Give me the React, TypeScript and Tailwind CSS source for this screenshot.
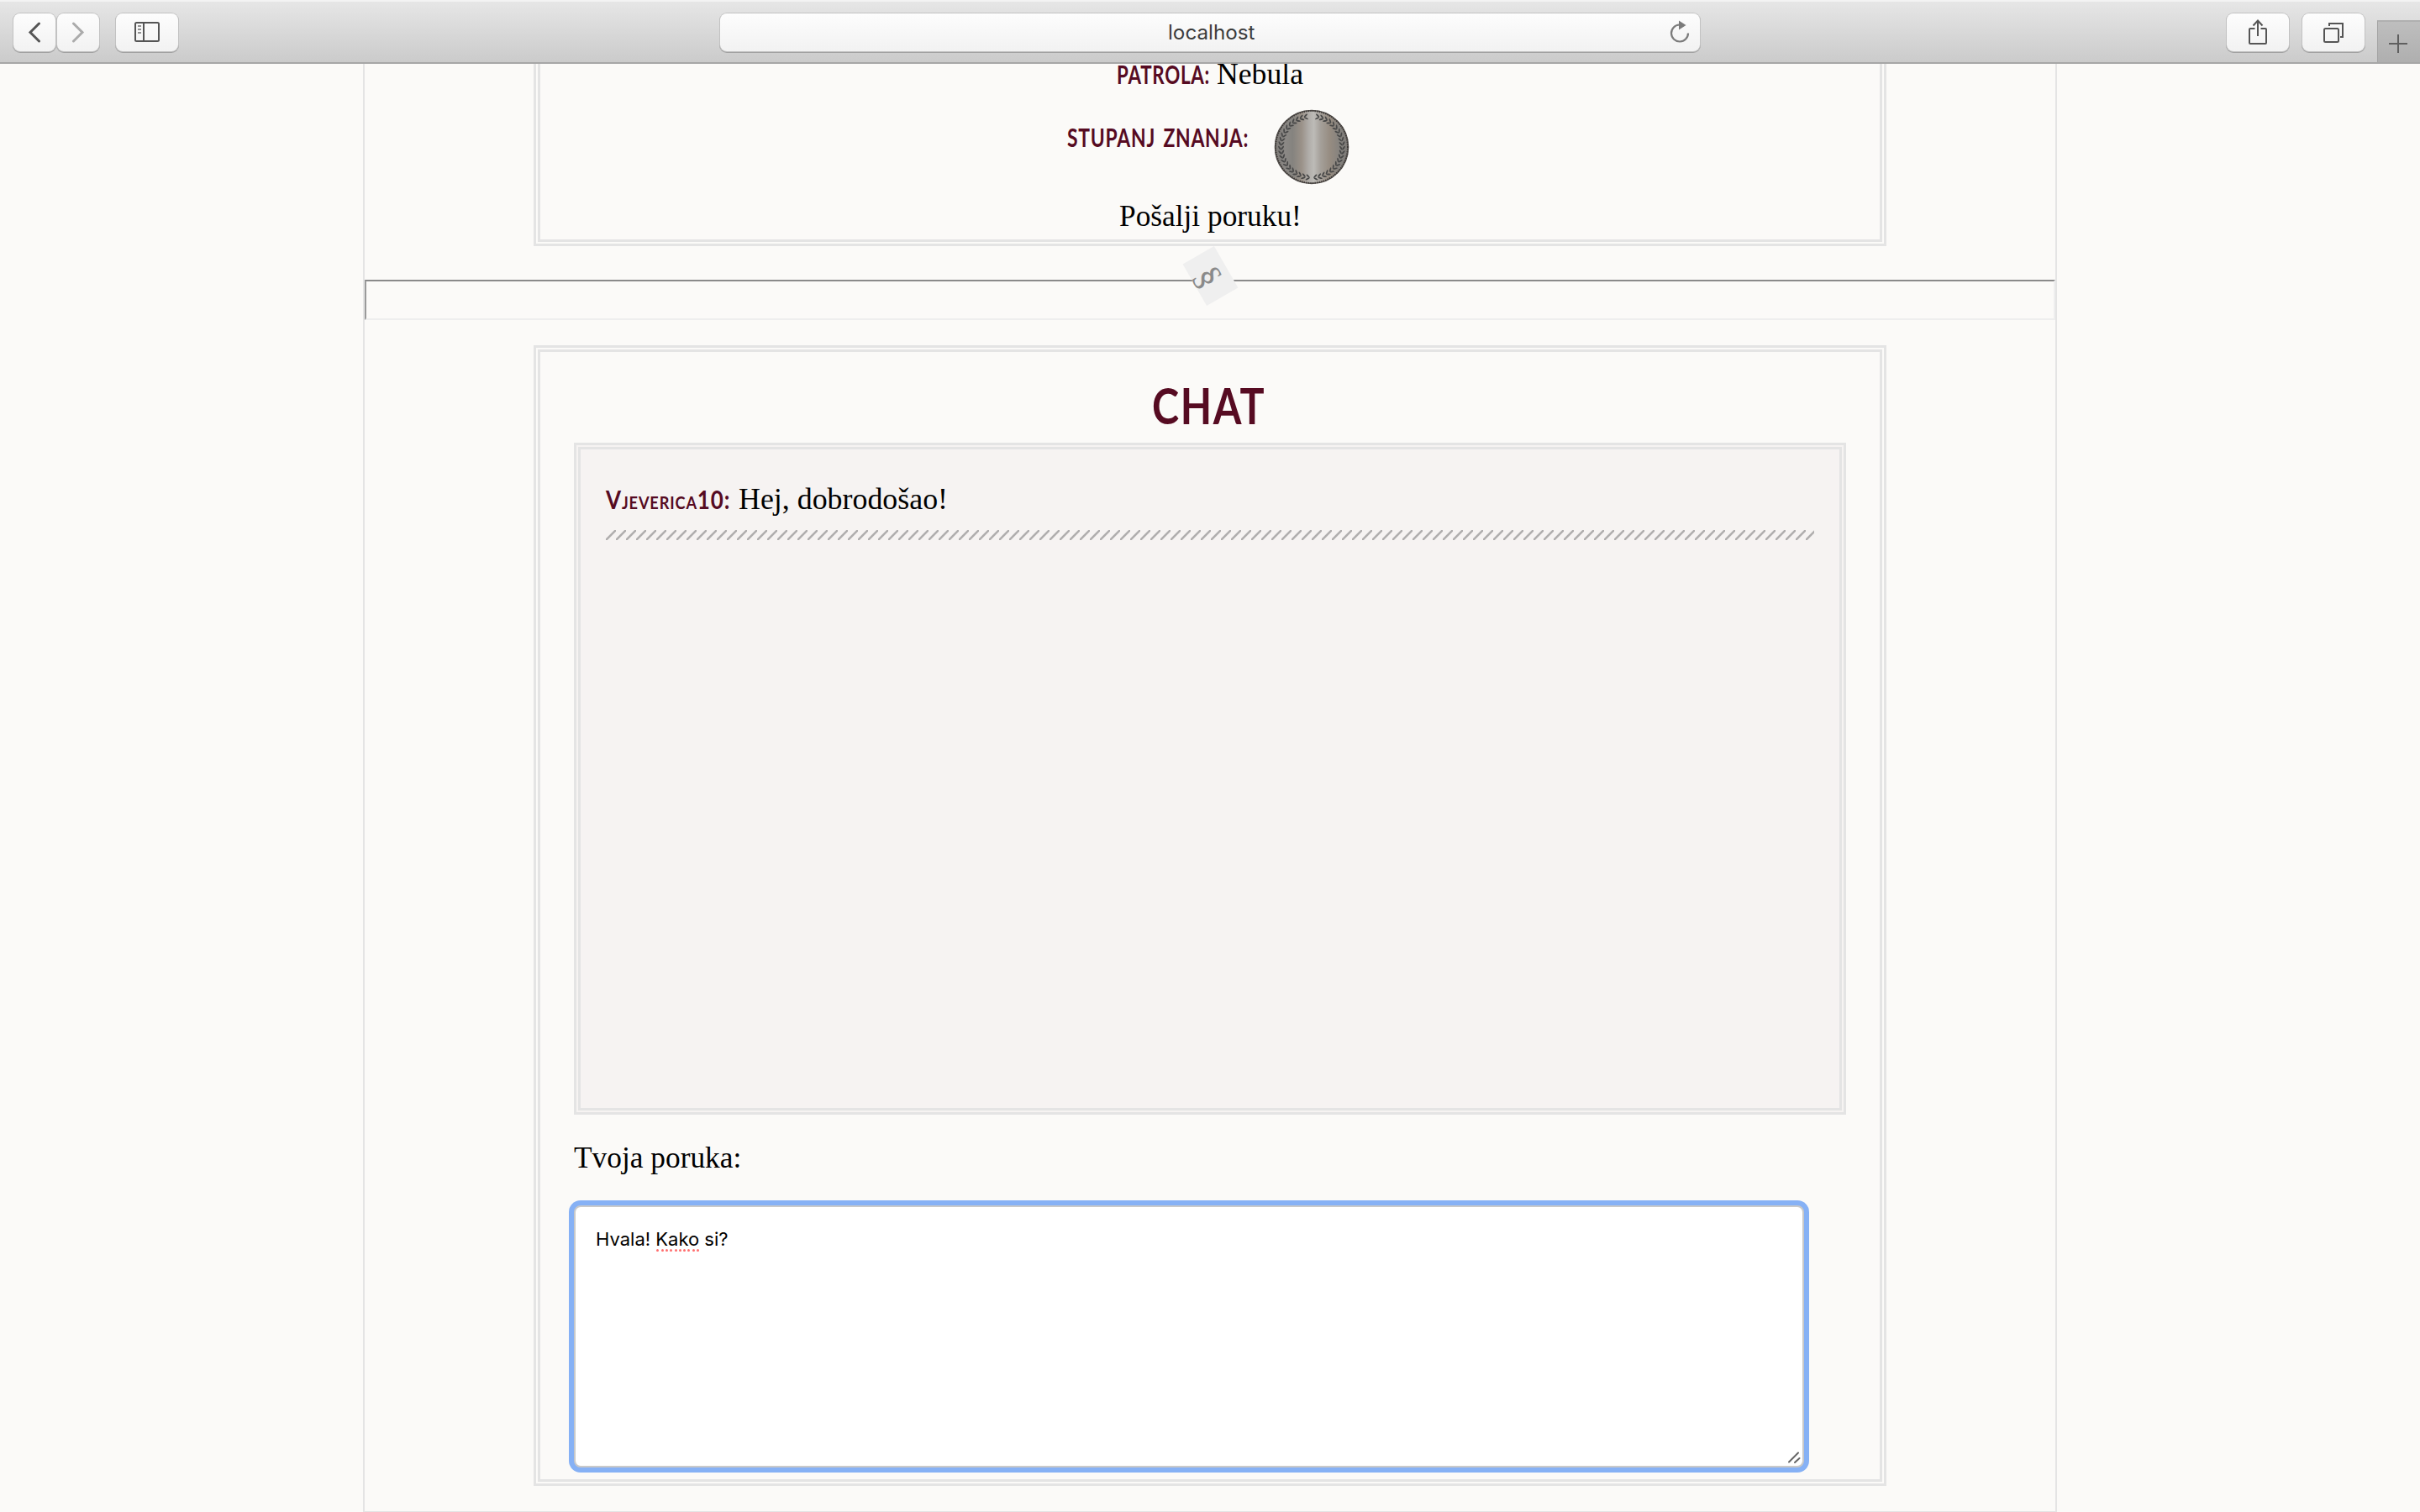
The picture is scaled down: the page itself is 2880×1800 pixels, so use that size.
import { useLayoutEffect, useRef, useState, type ReactNode } from "react";

type FitProps = { width: number; className?: string; children: ReactNode };

/** Keeps a run of text at a fixed width by condensing its letters. */
function Fit({ width, className = "", children }: FitProps) {
  const ref = useRef<HTMLSpanElement>(null);
  const [scale, setScale] = useState(1);
  useLayoutEffect(() => {
    if (ref.current) setScale(width / ref.current.offsetWidth);
  }, [width]);
  return (
    <span className={`inline-block whitespace-nowrap ${className}`} style={{ width }}>
      <span ref={ref} className="inline-block origin-left" style={{ transform: `scaleX(${scale})` }}>
        {children}
      </span>
    </span>
  );
}

const serif = "font-['Liberation_Serif',serif] text-[35px] leading-[40px] text-black";
const label = "font-[Lato,sans-serif] text-[30px] leading-[40px] font-bold tracking-[1px] text-[#560b22]";
const button =
  "flex h-[45px] items-center justify-center rounded-[8px] bg-linear-to-b from-[#fdfdfd] to-[#f2f2f2] shadow-[0_0_0_1px_#c2c2c2,0_1px_0_1px_#a2a2a2]";

function Toolbar() {
  return (
    <header className="relative z-10 flex h-[76px] shrink-0 items-start border-t-2 border-b-2 border-t-[#f3f3f3] border-b-[#a6a6a6] bg-linear-to-b from-[#e6e6e6] to-[#cbcbcb] pt-[14px] pl-[16px]">
      <div className={`${button} w-[50px]`}>
        <svg width="16" height="26" viewBox="0 0 16 26" fill="none" stroke="#555" strokeWidth="3" strokeLinecap="round">
          <path d="M13.5 2 3 12.500 13.5 23" />
        </svg>
      </div>
      <div className={`${button} ml-[2px] w-[50px]`}>
        <svg width="16" height="26" viewBox="0 0 16 26" fill="none" stroke="#ababab" strokeWidth="3" strokeLinecap="round">
          <path d="M2.5 2 13 12.500 2.5 23" />
        </svg>
      </div>
      <div className={`${button} ml-[20px] w-[74px]`}>
        <svg className="-mt-px" width="30" height="24" viewBox="0 0 30 24" fill="none" stroke="#555" strokeWidth="2">
          <rect x="1" y="1" width="28" height="22" rx="1.5" />
          <path d="M11 1v22" />
          <path d="M4 5h4M4 9h4M4 13h4" stroke="#909090" />
        </svg>
      </div>
      <div className={`${button} relative ml-[645px] w-[1166px] pt-px pl-[4px]`}>
        <Fit width={104} className="font-[Inter,sans-serif] text-[24px] leading-[30px] text-[#3c3c3c]">
          localhost
        </Fit>
        <svg className="absolute top-[8px] right-[11px]" width="26" height="28" viewBox="0 0 26 28" fill="none">
          <path d="M12.5 5.5A10 10 0 1 0 23 15.5" stroke="#7b7b7b" strokeWidth="2.2" />
          <path d="M12 .5 20.5 6 12 11.5z" fill="#7b7b7b" />
        </svg>
      </div>
      <div className={`${button} ml-[627px] w-[74px]`}>
        <svg className="-mt-[2px]" width="24" height="32" viewBox="0 0 24 32" fill="none" stroke="#555" strokeWidth="2">
          <path d="M8.500 12H3Q2 12 2 13V29Q2 30 3 30H21Q22 30 22 29V13Q22 12 21 12H15.500" />
          <path d="M12 21V3M6.500 8.500 12 2.500 17.500 8.500" />
        </svg>
      </div>
      <div className={`${button} ml-[16px] w-[74px]`}>
        <svg width="26" height="26" viewBox="0 0 26 26" fill="none" stroke="#555" strokeWidth="2">
          <rect x="2" y="8" width="17" height="16" rx="1.500" />
          <path d="M8 5V2H24V18H21" />
        </svg>
      </div>
      <div className="mt-[8px] ml-[15px] flex h-[50px] w-[51px] items-center justify-center border-t-2 border-l border-t-[#b0b0b0] border-l-[#a3a3a3] bg-linear-to-b from-[#bebebe] to-[#afafaf] pt-[3px] pr-[3px]">
        <svg width="24" height="24" viewBox="0 0 24 24" stroke="#5f5f5f" strokeWidth="2">
          <path d="M12 1v22M1 12h22" />
        </svg>
      </div>
    </header>
  );
}

function Medal() {
  const leaves = Array.from({ length: 21 }, (_, i) => 9 + i * 8.1);
  return (
    <svg width="90" height="90" viewBox="-45 -45 90 90">
      <defs>
        <linearGradient id="metal" x1="0" x2="1" y1="0" y2="0">
          <stop offset="0" stopColor="#7d7a77" />
          <stop offset="0.14" stopColor="#8b8885" />
          <stop offset="0.24" stopColor="#85837f" />
          <stop offset="0.36" stopColor="#9a9188" />
          <stop offset="0.46" stopColor="#b0ada9" />
          <stop offset="0.53" stopColor="#bdbbb7" />
          <stop offset="0.62" stopColor="#a5a09a" />
          <stop offset="0.75" stopColor="#968c81" />
          <stop offset="0.88" stopColor="#85827e" />
          <stop offset="1" stopColor="#7d7a77" />
        </linearGradient>
      </defs>
      <circle r="43.5" fill="url(#metal)" stroke="#5a5653" strokeWidth="1.6" />
      <circle r="42.9" fill="none" stroke="#383432" strokeWidth="1.8" strokeDasharray="1.3 1.3" />
      {[1, -1].map((side) => (
        <g key={side} transform={`scale(${side} 1)`} fill="#484848">
          {leaves.map((a) => (
            <g key={a} transform={`rotate(${a}) translate(0 -36.500)`}>
              <ellipse cx="0" cy="-2" rx="2.8" ry="0.95" transform="rotate(35)" />
              <ellipse cx="0" cy="2" rx="2.8" ry="0.95" transform="rotate(-35)" />
            </g>
          ))}
        </g>
      ))}
    </svg>
  );
}

function ProfileCard() {
  return (
    <section className="mx-auto flex h-[217px] w-[1610px] shrink-0 flex-col items-center border-x-8 border-b-8 border-double border-[#e4e4e4]">
      <div className="-mt-[8px] flex h-[40px] items-baseline gap-[8px]">
        <Fit width={111} className={label}>PATROLA:</Fit>
        <Fit width={103} className={serif}>Nebula</Fit>
      </div>
      <div className="mt-[22px] mr-[4px] flex h-[90px] items-start gap-[30px]">
        <Fit width={216} className={`${label} mt-[13px] [word-spacing:4px]`}>STUPANJ ZNANJA:</Fit>
        <Medal />
      </div>
      <Fit width={217} className={`${serif} mt-[18px]`}>Pošalji poruku!</Fit>
    </section>
  );
}

function Divider() {
  return (
    <div className="relative mt-[40px] h-[48px] shrink-0 border-2 border-t-[#8a8a8a] border-r-[#eeeeee] border-b-[#eeeeee] border-l-[#9a9a9a]">
      <span className="absolute -top-[28px] left-[976px] flex h-[43px] w-[57px] rotate-60 items-center justify-center bg-[#efefef] pb-[1px] font-['Liberation_Serif',serif] text-[43px] leading-[43px] text-[#8a8a8a]">
        <span className="mt-[4px]">§</span>
      </span>
    </div>
  );
}

function Chat() {
  return (
    <section className="mx-auto mt-[30px] flex h-[1358px] w-[1610px] shrink-0 flex-col border-8 border-double border-[#e4e4e4] px-[40px] pt-[33px]">
      <h1 className="pr-[4px] text-center font-[Lato,sans-serif] text-[60px] leading-[60px] font-bold tracking-[2px] text-[#560b22]">
        <Fit width={135}>CHAT</Fit>
      </h1>
      <div className="mt-[15px] h-[800px] border-8 border-double border-[#e4e4e4] bg-[#f6f3f2] px-[30px] pt-[39px]">
        <div className="flex h-[40px] items-baseline gap-[10px]">
          <Fit width={148} className={`${label} font-black [font-variant-caps:small-caps]`}>Vjeverica10:</Fit>
          <Fit width={249} className={serif}>Hej, dobrodošao!</Fit>
        </div>
        <svg className="mt-[17px] block h-[12px] w-full">
          <defs>
            <pattern id="hatch" width="12" height="12" patternUnits="userSpaceOnUse">
              <path d="M0 12 12 0" stroke="#b0aeae" strokeWidth="2.6" />
            </pattern>
          </defs>
          <rect width="100%" height="12" fill="url(#hatch)" />
        </svg>
      </div>
      <div className="mt-[32px] h-[40px]">
        <Fit width={199} className={serif}>Tvoja poruka:</Fit>
      </div>
      <div className="relative mt-[36px] flex h-[312px] w-[1464px] items-start rounded-[8px] border-2 border-[#c9c9c9] bg-white pt-[23px] pl-[24px] font-[Inter,sans-serif] text-[22px] leading-[30px] text-black shadow-[0_0_0_6px_#86b1f5]">
        <Fit width={158}>
          Hvala!{" "}
          <span className="relative">
            Kako
            <span className="absolute top-[25px] left-px flex w-[calc(100%-1px)] justify-between">
              {Array.from({ length: 10 }, (_, i) => (
                <i key={i} className="size-[3px] rounded-full bg-[#ff6f6f]" />
              ))}
            </span>
          </span>{" "}
          si?
        </Fit>
        <svg className="absolute right-[2px] bottom-[2px]" width="16" height="16" viewBox="0 0 16 16" stroke="#666" strokeWidth="2" strokeLinecap="round">
          <path d="M2 13.500 13 2.500M9 14 14.500 9" />
        </svg>
      </div>
    </section>
  );
}

export default function App() {
  return (
    <div className="flex h-[1800px] w-[2880px] flex-col overflow-hidden bg-[#fbfaf8]">
      <Toolbar />
      <main className="mx-auto flex h-[1725px] w-[2016px] shrink-0 flex-col border-2 border-t-0 border-[#e4e4e4]">
        <ProfileCard />
        <Divider />
        <Chat />
      </main>
    </div>
  );
}
